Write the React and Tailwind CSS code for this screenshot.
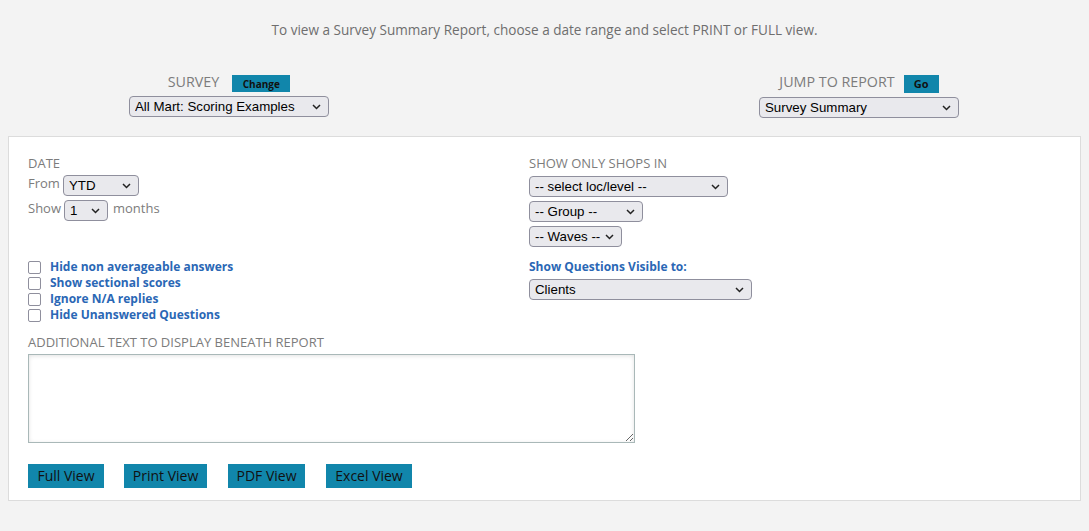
import { useState } from "react";

const label = "font-['Open_Sans',sans-serif] text-[13px] uppercase text-[#7c7c7c]";
const topLabel = "font-['Open_Sans',sans-serif] text-[14.3px] uppercase text-[#7c7c7c] -mt-[4px]";
const blueBtn =
  "bg-[#1186ab] text-[#111] font-['Open_Sans',sans-serif] leading-none";

function Select({ value, options, className = "" }) {
  const [val, setVal] = useState(value);
  return (
    <div className={`relative flex items-center ${className}`}>
      <select
        value={val}
        onChange={(e) => setVal(e.target.value)}
        className="appearance-none self-stretch w-full bg-[#e9e9ed] border border-[#8f8f9d] rounded-[4px] pl-[5px] pr-[18px] pt-[1px] font-['Liberation_Sans',Arial,sans-serif] text-[13.3px] text-black leading-none outline-none"
      >
        {options.map((o) => (
          <option key={o}>{o}</option>
        ))}
      </select>
      <svg
        className="pointer-events-none absolute right-[8px]"
        width="9"
        height="6"
        viewBox="0 0 9 6"
      >
        <path d="M1 1l3.5 3.5L8 1" fill="none" stroke="#222" strokeWidth="1.5" />
      </svg>
    </div>
  );
}

function Check({ text }) {
  const [on, setOn] = useState(false);
  return (
    <label className="flex items-center h-4 cursor-pointer">
      <input
        type="checkbox"
        checked={on}
        onChange={() => setOn(!on)}
        className="appearance-none w-[13px] h-[13px] border border-[#8f8f9d] rounded-[2px] bg-white checked:bg-[#1186ab] m-0"
      />
      <span className="ml-[9px] font-['Open_Sans',sans-serif] font-bold text-[12px] text-[#2a67b5]">
        {text}
      </span>
    </label>
  );
}

export default function App() {
  return (
    <div className="min-h-[531px] w-full bg-[#f3f3f3] pt-[21px] pb-[29px]">
      <p className="text-center font-['Open_Sans',sans-serif] text-[13.55px] text-[#6e6e6e] leading-[18px]">
        To view a Survey Summary Report, choose a date range and select PRINT or FULL view.
      </p>

      {/* Survey / Jump */}
      <div className="flex mt-[29px] h-[54px]">
        <div className="ml-[129px] w-[200px] flex flex-col items-center">
          <div className="flex items-center h-[17px] mt-[7px]">
            <span className={topLabel}>Survey</span>
            <button className={`${blueBtn} ml-[13px] w-[58px] h-[17px] text-[10px] font-bold`}>
              Change
            </button>
          </div>
          <Select
            value="All Mart: Scoring Examples"
            options={["All Mart: Scoring Examples"]}
            className="w-[200px] h-[21px] mt-[4px]"
          />
        </div>
        <div className="ml-[430px] w-[200px] flex flex-col items-center">
          <div className="flex items-center h-[17px] mt-[7px]">
            <span className={topLabel}>Jump to Report</span>
            <button className={`${blueBtn} ml-[9px] w-[35px] h-[18px] text-[11px] font-bold`}>
              Go
            </button>
          </div>
          <Select
            value="Survey Summary"
            options={["Survey Summary"]}
            className="w-[200px] h-[21px] mt-[5px]"
          />
        </div>
      </div>

      {/* Panel */}
      <div className="mx-[8px] mt-[14px] bg-white border border-[#dcdcdc] px-[19px] pt-[17px] pb-[12px]">
        <div className="flex">
          <div className="w-[501px]">
            <div className={`${label} leading-[18px]`}>Date</div>
            <div className="flex items-center mt-[3px] h-[21px]">
              <span className="font-['Open_Sans',sans-serif] text-[13px] text-[#7c7c7c] -mt-[3px]">From</span>
              <Select value="YTD" options={["YTD", "MTD", "QTD"]} className="ml-[3px] w-[76px] h-[21px]" />
            </div>
            <div className="flex items-center mt-[4px] h-[21px]">
              <span className="font-['Open_Sans',sans-serif] text-[13px] text-[#7c7c7c] -mt-[3px]">Show</span>
              <Select value="1" options={["1", "2", "3", "6", "12"]} className="ml-[3px] w-[44px] h-[21px]" />
              <span className="ml-[5px] font-['Open_Sans',sans-serif] text-[13px] text-[#7c7c7c] -mt-[3px]">months</span>
            </div>
            <div className="mt-[38px] flex flex-col">
              <Check text="Hide non averageable answers" />
              <Check text="Show sectional scores" />
              <Check text="Ignore N/A replies" />
              <Check text="Hide Unanswered Questions" />
            </div>
          </div>
          <div className="flex-1">
            <div className={`${label} leading-[18px]`}>Show only shops in</div>
            <div className="flex flex-col items-start">
              <Select value="-- select loc/level --" options={["-- select loc/level --"]} className="mt-[4px] w-[199px] h-[21px]" />
              <Select value="-- Group --" options={["-- Group --"]} className="mt-[4px] w-[114px] h-[21px]" />
              <Select value="-- Waves --" options={["-- Waves --"]} className="mt-[4px] w-[93px] h-[21px]" />
            </div>
            <div className="mt-[12px] font-['Open_Sans',sans-serif] font-bold text-[12px] text-[#2a67b5] leading-[16px]">
              Show Questions Visible to:
            </div>
            <Select value="Clients" options={["Clients", "Shoppers", "Everyone"]} className="mt-[4px] w-[223px] h-[21px]" />
          </div>
        </div>

        <div className={`${label} leading-[18px] mt-[10px]`}>Additional text to display beneath report</div>
        <textarea className="block mt-[3px] w-[607px] h-[89px] border border-[#a9b8b8] bg-white shadow-[inset_0_1px_4px_rgba(0,0,0,0.12)] outline-none p-1 font-['Open_Sans',sans-serif] text-[13px]" />

        <div className="flex gap-[20px] mt-[21px]">
          <button className={`${blueBtn} w-[76px] h-[24px] text-[14px]`}>Full View</button>
          <button className={`${blueBtn} w-[83px] h-[24px] text-[14px]`}>Print View</button>
          <button className={`${blueBtn} w-[77px] h-[24px] text-[14px] ml-[1px]`}>PDF View</button>
          <button className={`${blueBtn} w-[86px] h-[24px] text-[14px] ml-[1px]`}>Excel View</button>
        </div>
      </div>
    </div>
  );
}
